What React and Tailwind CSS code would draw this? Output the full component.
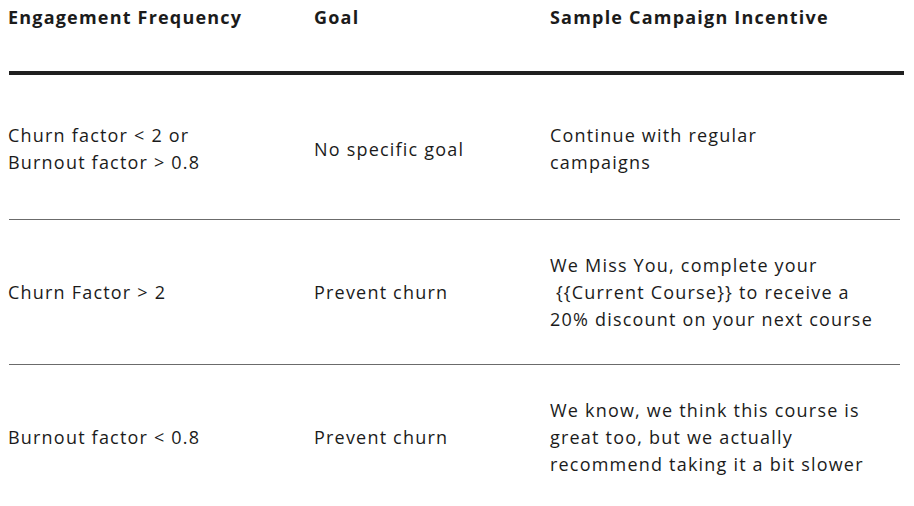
import React from 'react';

const ROWS = [
  {
    freq: ['Churn factor < 2 or', 'Burnout factor > 0.8'],
    goal: 'No specific goal',
    incentive: ['Continue with regular', 'campaigns'],
  },
  {
    freq: ['Churn Factor > 2'],
    goal: 'Prevent churn',
    incentive: ['We Miss You, complete your', '\u00a0{{Current Course}} to receive a', '20% discount on your next course'],
  },
  {
    freq: ['Burnout factor < 0.8'],
    goal: 'Prevent churn',
    incentive: ['We know, we think this course is', 'great too, but we actually', 'recommend taking it a bit slower'],
  },
];

function Lines({ lines }) {
  return (
    <div>
      {lines.map((l) => (
        <div key={l} className="whitespace-nowrap">{l}</div>
      ))}
    </div>
  );
}

export default function App() {
  return (
    <div
      className="h-[506px] w-[914px] overflow-hidden bg-white tracking-[1.2px] text-[#1b1b1b]"
      style={{ fontFamily: '"Open Sans", "Noto Sans", sans-serif' }}
    >
      {/* Header */}
      <div className="flex h-[35px] items-center pl-[8px] text-[18px] font-bold">
        <div className="w-[306px]">Engagement Frequency</div>
        <div className="w-[236px]">Goal</div>
        <div>Sample Campaign Incentive</div>
      </div>
      <div className="ml-[9px] mt-[36px] h-[4px] w-[895px] bg-[#1f1f1f]" />

      {/* Body */}
      <div className="text-[18px] leading-[27px]">
        {ROWS.map((r, i) => (
          <div key={i}>
            <div className={`flex h-[144px] items-center pl-[8px] ${i === 0 ? 'pt-[4px]' : ''}`}>
              <div className="w-[306px]">
                <Lines lines={r.freq} />
              </div>
              <div className="w-[236px]">{r.goal}</div>
              <div>
                <Lines lines={r.incentive} />
              </div>
            </div>
            {i < ROWS.length - 1 && <div className="ml-[9px] h-[1px] w-[891px] bg-[#6b6b6b]" />}
          </div>
        ))}
      </div>
    </div>
  );
}
